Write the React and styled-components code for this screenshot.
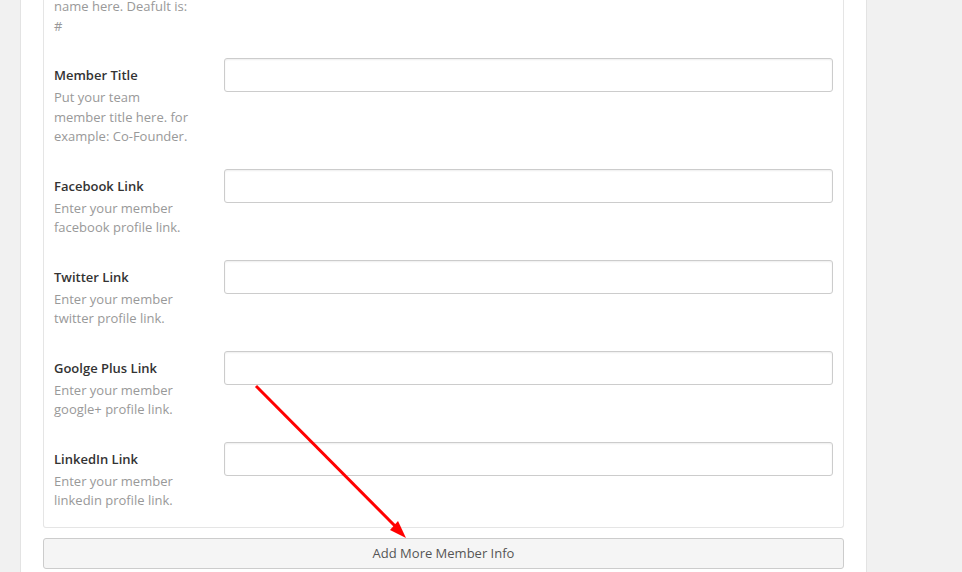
import React from "react";
import styled, { createGlobalStyle } from "styled-components";

const Global = createGlobalStyle`
  html, body { margin: 0; padding: 0; background: #f1f1f1; }
  body { font-family: "Open Sans", "Noto Sans", sans-serif; font-size: 13px; color: #444; overflow: hidden; }
`;

const Page = styled.div`
  display: flex;
  height: 572px;
  padding-left: 20px;
  position: relative;
`;

const Panel = styled.div`
  width: 847px;
  flex: none;
  background: #fff;
  border-left: 1px solid #e3e3e3;
  border-right: 1px solid #e3e3e3;
  padding: 0 22px;
  box-sizing: border-box;
`;

const FieldBox = styled.div`
  border: 1px solid #e5e5e5;
  border-top: none;
  border-radius: 0 0 3px 3px;
  padding: 0 10px;
`;

const Row = styled.div`
  display: flex;
  align-items: flex-start;
  padding-bottom: 22px;
  &:last-child { padding-bottom: 16px; }
`;

const LabelCol = styled.div`
  width: 170px;
  flex: none;
  padding-top: ${(p) => (p.$partial ? "0" : "7px")};
`;

const Label = styled.div`
  font-weight: 600;
  color: #333;
  line-height: 20px;
  margin-bottom: 3px;
`;

const Desc = styled.div`
  color: #999;
  line-height: 19.5px;
  width: 138px;
  margin-top: ${(p) => (p.$offset ? "-3px" : "0")};
`;

const Input = styled.input`
  flex: 1;
  min-width: 0;
  height: 34px;
  box-sizing: border-box;
  border: 1px solid #ccc;
  border-radius: 3px;
  box-shadow: inset 0 1px 2px rgba(0, 0, 0, 0.07);
  background: #fff;
  outline: none;
  font: inherit;
`;

const AddButton = styled.button`
  display: block;
  width: 100%;
  margin-top: 10px;
  height: 31px;
  box-sizing: border-box;
  background: #f5f5f5;
  border: 1px solid #ccc;
  border-radius: 3px;
  color: #555;
  font-family: "Open Sans", "Noto Sans", sans-serif;
  font-size: 13px;
  cursor: pointer;
`;

const Arrow = styled.svg`
  position: absolute;
  left: 0;
  top: 0;
  pointer-events: none;
`;

const fields = [
  { label: "Member Title", desc: "Put your team member title here. for example: Co-Founder." },
  { label: "Facebook Link", desc: "Enter your member facebook profile link." },
  { label: "Twitter Link", desc: "Enter your member twitter profile link." },
  { label: "Goolge Plus Link", desc: "Enter your member google+ profile link." },
  { label: "LinkedIn Link", desc: "Enter your member linkedin profile link." },
];

export default function App() {
  return (
    <>
      <Global />
      <Page>
        <Panel>
          <FieldBox>
            <Row>
              <LabelCol $partial>
                <Desc $offset>name here. Deafult is: #</Desc>
              </LabelCol>
            </Row>
            {fields.map((f) => (
              <Row key={f.label}>
                <LabelCol>
                  <Label>{f.label}</Label>
                  <Desc>{f.desc}</Desc>
                </LabelCol>
                <Input type="text" />
              </Row>
            ))}
          </FieldBox>
          <AddButton type="button">Add More Member Info</AddButton>
        </Panel>
        <Arrow width="962" height="572" viewBox="0 0 962 572">
          <line x1="256" y1="386" x2="398" y2="529" stroke="#ff0000" strokeWidth="3" />
          <polygon points="406,538 390,530 398,521" fill="#ff0000" />
        </Arrow>
      </Page>
    </>
  );
}
